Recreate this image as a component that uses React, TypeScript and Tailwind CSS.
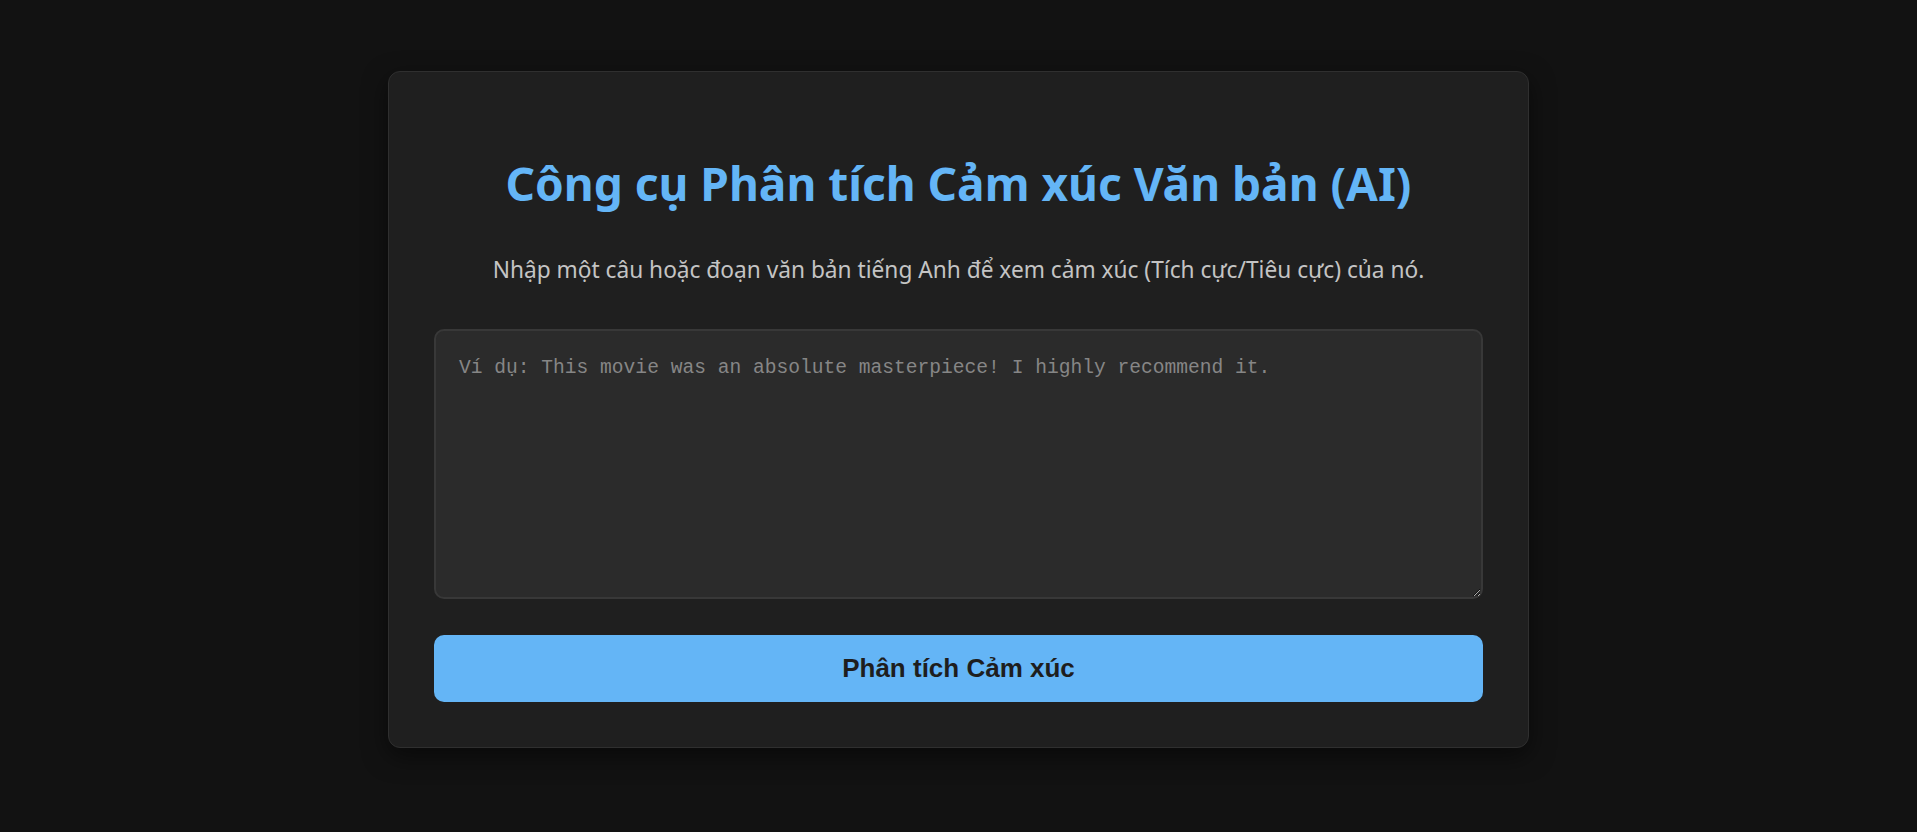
import { useState } from 'react';

export default function App() {
    const [text, setText] = useState('');

    return (
        <div className="min-h-[832px] bg-[#121212] pt-[71px]">
            <div className="mx-auto w-[1141px] rounded-xl border border-[#2f2f2f] bg-[#1f1f1f] px-[45px] pt-[86px] pb-[45px] shadow-[0_8px_24px_rgba(0,0,0,0.5)]">
                <h1 className="mb-[46px] text-center font-['Noto_Sans',sans-serif] text-[46px] leading-[50px] font-bold text-[#64b5f6]">
                    Công cụ Phân tích Cảm xúc Văn bản (AI)
                </h1>
                <p className="mb-[43px] text-center font-['Noto_Sans',sans-serif] text-[22.7px] leading-[32px] text-[#c4c4c4]">
                    Nhập một câu hoặc đoạn văn bản tiếng Anh để xem cảm xúc (Tích cực/Tiêu cực) của nó.
                </p>
                <textarea
                    value={text}
                    onChange={(e) => setText(e.target.value)}
                    placeholder="Ví dụ: This movie was an absolute masterpiece! I highly recommend it."
                    className="block h-[270px] w-full rounded-[10px] border-2 border-[#383838] bg-[#2b2b2b] px-[23px] pt-[25px] pb-[18px] font-['Liberation_Mono',monospace] text-[19.6px] leading-[24px] text-[#e0e0e0] outline-none placeholder:text-[#868686]"
                />
                <button className="mt-[36px] block h-[67px] w-full rounded-[10px] bg-[#64b5f6] font-['Liberation_Sans',Arial,sans-serif] text-[26px] font-bold text-[#1e1e1e]">
                    Phân tích Cảm xúc
                </button>
            </div>
        </div>
    );
}
